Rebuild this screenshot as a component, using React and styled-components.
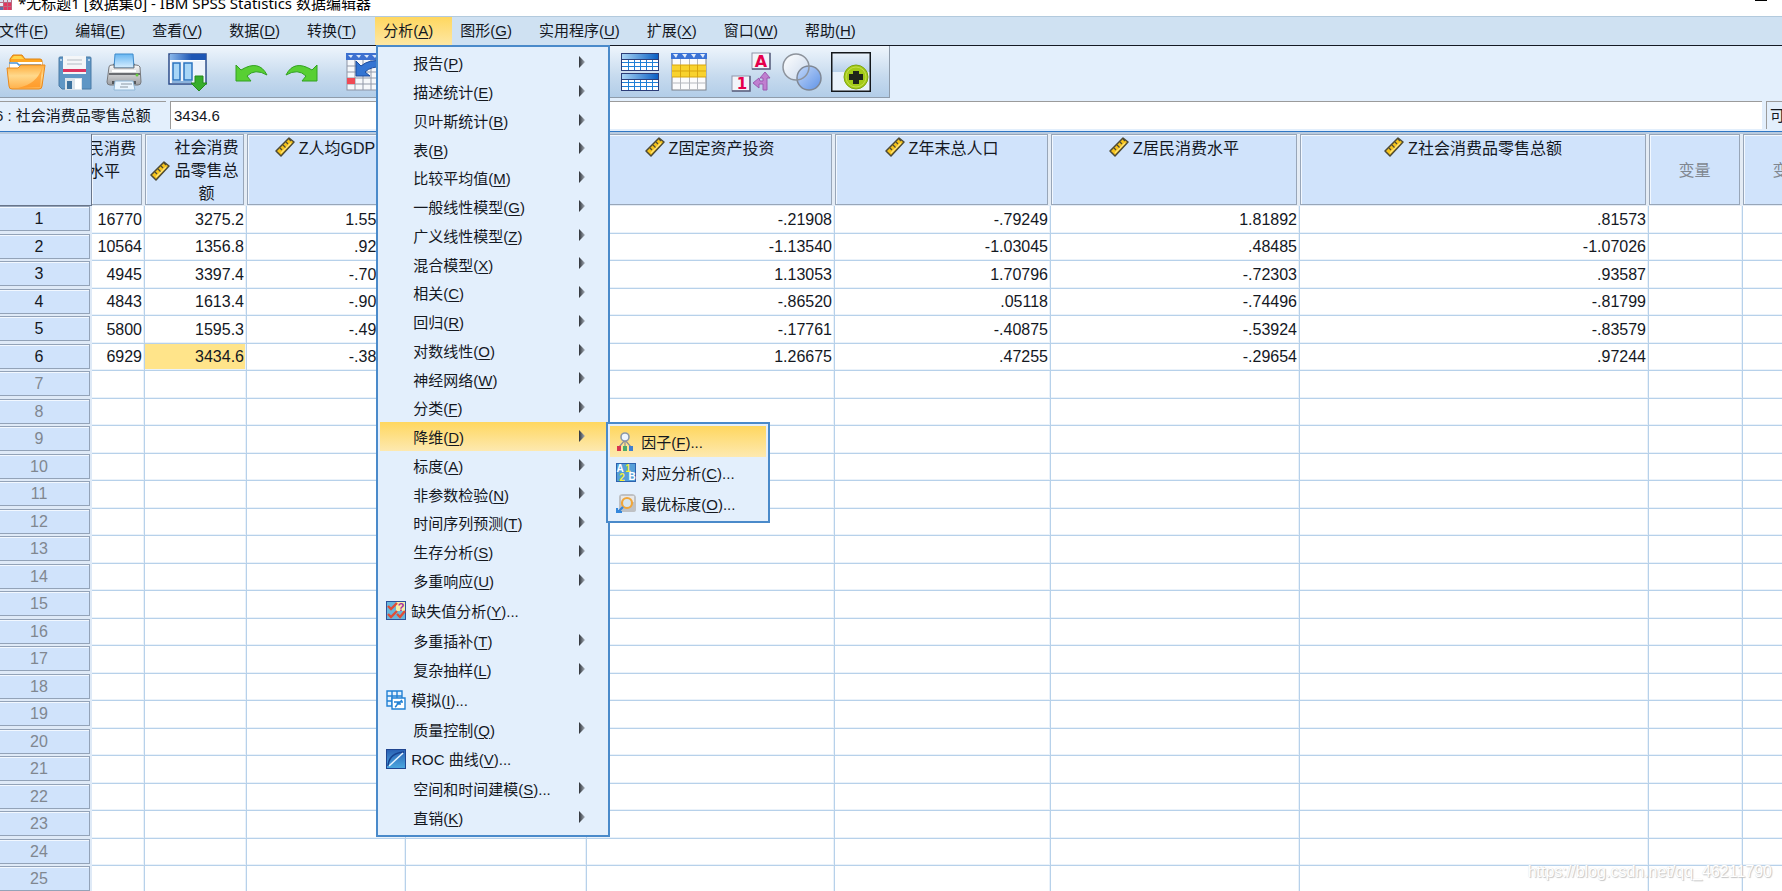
import React from "react";
import styled, { createGlobalStyle, css } from "styled-components";

const GlobalStyle = createGlobalStyle`
  * { box-sizing: border-box; }
  html, body { margin: 0; padding: 0; overflow: hidden; }
  body, button, input {
    font-family: "Liberation Sans", "Noto Sans CJK SC", sans-serif;
    font-size: 15px;
    color: #14181f;
  }
  button { border: 0; background: none; padding: 0; margin: 0; }
  svg { display: block; flex: none; }
`;

const Window = styled.div`
  height: 100vh;
  display: flex;
  flex-direction: column;
  overflow: hidden;
  background: #fff;
`;

const TitleBar = styled.header`
  height: 16px;
  flex: none;
  display: flex;
  justify-content: space-between;
  overflow: hidden;
  padding-right: 15px;
`;

const TitleLeft = styled.div`
  display: flex;
  align-items: flex-start;
  gap: 6px;
`;

const Title = styled.h1`
  margin: -8px 0 0;
  font: 400 15px/22px "Noto Sans", "Noto Sans CJK SC", sans-serif;
  color: #000;
  white-space: nowrap;
`;

const Minimize = styled.button`
  width: 12px;
  height: 1px;
  background: #000;
`;

const MenuBar = styled.nav`
  flex: none;
  display: flex;
  height: 30px;
  padding-right: 8px;
  background: #cfe1f2;
  border-top: 1px solid #b3cadd;
  border-bottom: 1px solid #151a24;
`;

const MenuSlot = styled.div`
  position: relative;
  display: flex;
  &:first-child { margin-left: -9px; }
`;

const MenuButton = styled.button`
  padding: 0 19px 0 8px;
  line-height: 28px;
  white-space: nowrap;
  background: ${(p) => (p.$open ? "linear-gradient(#ffd75f, #fde7a4)" : "none")};
`;

const Key = styled.u`
  text-underline-offset: 2px;
  text-decoration-thickness: 1px;
`;

const popup = css`
  position: absolute;
  background: #e3effc;
  border: 2px solid #4a8aca;
  display: flex;
  flex-direction: column;
`;

const DropDown = styled.div`
  ${popup}
  z-index: 5;
  top: 28px;
  left: 1px;
  width: 234px;
  padding: 1px 0 3px 2px;
`;

const SubMenu = styled.div`
  ${popup}
  z-index: 6;
  top: 0;
  left: 226px;
  width: 164px;
  padding: 2px;
`;

const ItemSlot = styled.div`
  position: relative;
  display: flex;
  height: ${(p) => (p.$tall ? "31px" : "29px")};
  &:nth-child(4n) { height: ${(p) => (p.$tall ? "31px" : "28px")}; }
`;

const Item = styled.button`
  flex: 1;
  display: grid;
  grid-template-columns: ${(p) => (p.$icon ? "20px" : "28px")} 1fr 8px;
  column-gap: 5px;
  align-items: center;
  padding: 0 22px 0 ${(p) => (p.$icon ? "6px" : "0px")};
  text-align: left;
  white-space: nowrap;
  background: ${(p) => (p.$active ? "linear-gradient(#ffd75f, #fde9b0)" : "none")};
`;

const Toolbar = styled.div`
  flex: none;
  height: 55px;
  display: flex;
  align-items: flex-start;
  background: #e3effc;
`;

const ToolPanel = styled.div`
  width: 890px;
  height: 52px;
  display: flex;
  align-items: center;
  gap: 24px;
  padding-left: 6px;
  background: linear-gradient(#eef5fc, #c6daee 60%, #b2cde8);
  border-right: 1px solid #8f9cab;
  border-bottom: 1px solid #8f9cab;
`;

const ToolGroup = styled.div`
  display: flex;
  gap: 9px;
`;

const ToolButton = styled.button`
  width: 40px;
  height: 40px;
  display: grid;
  place-content: center;
`;

const CellBar = styled.div`
  flex: none;
  height: 30px;
  display: flex;
  gap: 4px;
  padding-bottom: 2px;
  background: #e3effc;
`;

const CellName = styled.label`
  width: 166px;
  flex: none;
  overflow: hidden;
  line-height: 28px;
  white-space: nowrap;
  border-top: 1px solid #9b9b9b;
`;

const CellNameText = styled.span`
  display: block;
  margin-left: -5px;
`;

const CellValue = styled.input`
  flex: 1;
  min-width: 0;
  padding: 0 3px;
  background: #fff;
  border: 0;
  border-top: 1px solid #9b9b9b;
  border-left: 1px solid #9b9b9b;
  outline: 0;
`;

const VisibleCount = styled.div`
  width: 16px;
  flex: none;
  overflow: hidden;
  padding-left: 3px;
  line-height: 28px;
  white-space: nowrap;
  border-top: 1px solid #9b9b9b;
  border-left: 1px solid #9b9b9b;
`;

const GridArea = styled.main`
  flex: 1;
  min-height: 0;
  overflow: hidden;
  border-top: 1px solid #2f77c5;
`;

const Sheet = styled.table`
  width: 100%;
  min-width: 1837px;
  table-layout: fixed;
  border-collapse: separate;
  border-spacing: 0;
  font-size: 16px;
  border-top: 2px solid #b9cbdf;
`;

const Col = styled.col`
  width: ${(p) => p.$w}px;
`;

const HeadCell = styled.th`
  height: 72px;
  padding: 0 3px 1px 0;
  font-weight: 400;
  vertical-align: top;
  background: #e4ecf5;
`;

const HeadBox = styled.div`
  height: 71px;
  display: flex;
  align-items: ${(p) => (p.$middle ? "center" : "flex-start")};
  justify-content: ${(p) => (p.$clipped ? "flex-end" : "center")};
  gap: 4px;
  overflow: hidden;
  padding: 2px ${(p) => (p.$clipped ? "5px" : "0")} 0 0;
  line-height: 23px;
  text-align: center;
  white-space: pre;
  color: ${(p) => (p.$empty ? "#808790" : "#14181f")};
  background: #d0e3fb;
  border: solid #98a6b8;
  border-width: 1px 1px 1px ${(p) => (p.$clipped ? "0" : "1px")};
  box-shadow: inset 1px 1px 0 #f2f8ff;
`;

const Corner = styled(HeadCell)`
  background: #d0e3fb;
  border-right: 1px solid #68758a;
  border-bottom: 1px solid #68758a;
`;

const Row = styled.tr`
  height: 28px;
  &:nth-child(even) { height: 27px; }
`;

const RowHead = styled.th`
  padding: 0 2px 0 0;
  font-weight: 400;
  vertical-align: top;
  background: #dfeaf7;
`;

const RowBox = styled.div`
  height: 25px;
  padding-right: 11px;
  line-height: 24px;
  text-align: center;
  color: ${(p) => (p.$empty ? "#808790" : "#14181f")};
  background: #d0e3fb;
  border: solid #93a3b8;
  border-width: 1px 1px 1px 0;
  box-shadow: inset 0 1px 0 #f2f8ff;
`;

const Cell = styled.td`
  padding: 0 2px 0 0;
  line-height: 24px;
  text-align: right;
  overflow: hidden;
  white-space: nowrap;
  background: ${(p) => (p.$selected ? "#ffe48a" : "#fff")};
  border-right: 1px solid #b7d1ea;
  border-bottom: 1px solid #b7d1ea;
  box-shadow: inset -1px -1px 0 #eaf2fa;
`;

const Watermark = styled.div`
  position: absolute;
  right: 10px;
  bottom: 9px;
  font-size: 16px;
  line-height: 20px;
  color: #fff;
  text-shadow: 1px 1px 1px #c4c4c4, 0 0 1px #d8d8d8;
`;

/* ---------- icons ---------- */

const Arrow = () => (
  <svg width="8" height="14" viewBox="0 0 8 14">
    <defs>
      <linearGradient id="arrowFill"><stop offset="0" stopColor="#2e3238" /><stop offset="1" stopColor="#a8b0ba" /></linearGradient>
    </defs>
    <path d="M1 0L7 6L1 12Z" fill="url(#arrowFill)" />
  </svg>
);

const Ruler = () => (
  <svg width="20" height="20" viewBox="0 0 20 20">
    <path d="M1 14L14 1L19 5L6 19Z" fill="#f5c21b" stroke="#4d4a35" strokeWidth="1.5" strokeLinejoin="round" />
    <path d="M5 11l2 2M8 8l3 3M11 5l2 2M14 2l2 2" stroke="#4d4a35" strokeWidth="1.2" />
    <path d="M6 16L16 6" stroke="#ffe375" strokeWidth="1.2" />
  </svg>
);

const AppIcon = () => (
  <svg width="12" height="11" viewBox="0 0 12 11">
    <rect width="12" height="10" fill="#b9677f" />
    <path d="M0 0h3v2H0zM4 0h3v2H4zM8 0h3v2H8z" fill="#d9dfee" />
    <path d="M0 3h3v3H0z" fill="#e8edf5" /><path d="M4 3h3v3H4zM8 3h3v3H8zM4 7h3v3H4zM8 7h3v3H8z" fill="#e2365f" /><path d="M0 7h3v3H0z" fill="#5b6fa8" />
  </svg>
);

const OpenIcon = () => (
  <svg width="40" height="36" viewBox="0 0 40 36">
    <defs>
      <linearGradient id="fold" x2="0" y2="1"><stop offset="0" stopColor="#ffac3c" /><stop offset=".45" stopColor="#ffd98c" /><stop offset="1" stopColor="#ffb04a" /></linearGradient>
    </defs>
    <path d="M4 5l3-4h9l3 4h15q2 0 2 2v9H4z" fill="#ffa622" stroke="#df8412" />
    <path d="M5 5l3-3h7l3 3z" fill="#ffd54d" />
    <path d="M4 8h32v7H4z" fill="#fff" /><path d="M3 9h8l2 2h22" fill="none" stroke="#4a93d9" strokeWidth="1.5" />
    <path d="M1 14h11l3-3h24L36 32q0 3-3 3H6q-3 0-3-3z" fill="url(#fold)" stroke="#ea8a1d" />
    <path d="M12 34Q31 30 36 14L34 33z" fill="#ff8c12" opacity=".6" />
  </svg>
);

const SaveIcon = () => (
  <svg width="34" height="36" viewBox="0 0 34 36">
    <g transform="translate(0 2)">
      <path d="M1 2q0-1 1-1h30q1 0 1 1v31H4l-3-3z" fill="#5f96c5" stroke="#4b7ba5" />
      <path d="M5 0h23v18H5z" fill="#f4f6f8" /><path d="M9 4h15M9 8h15" stroke="#b4bcc4" /><path d="M5 13h23v3H5z" fill="#dd3560" />
      <path d="M7 22h17v12H7z" fill="#dbe4ec" /><path d="M9 25h5v8H9z" fill="#3d729f" /><path d="M17 23h6v10h-6z" fill="#fff" />
      <path d="M2 3h2v2H2zM30 3h2v2h-2z" fill="#b8d3ea" />
    </g>
  </svg>
);

const PrintIcon = () => (
  <svg width="36" height="40" viewBox="0 0 36 40">
    <defs>
      <linearGradient id="paper" x2="0" y2="1"><stop offset="0" stopColor="#67b6f2" /><stop offset="1" stopColor="#d9efff" /></linearGradient>
      <linearGradient id="body" x2="0" y2="1"><stop offset="0" stopColor="#fafafa" /><stop offset="1" stopColor="#9b9da1" /></linearGradient>
    </defs>
    <g transform="translate(0 1)">
      <path d="M6 13L9 9h18l3 4z" fill="#4c4e52" /><path d="M9 1h18l1 14H8z" fill="url(#paper)" stroke="#3f8bcb" />
      <path d="M3 14q0-2 3-2h2v3h20v-3h2q3 0 4 2l1 15q0 3-3 3H4q-3 0-3-3z" fill="url(#body)" stroke="#77797d" />
      <path d="M3 20h31v2H3z" fill="#6a6c70" /><path d="M6 17h24v2H6z" fill="#fff" /><circle cx="31" cy="22" r="1.5" fill="#67c93c" />
      <path d="M6 28h24v3H6z" fill="#55585c" /><path d="M9 28h18l2 9H8z" fill="#e9f5ff" stroke="#8fb6d6" /><path d="M15 31h11M14 34h8" stroke="#8b97a2" />
    </g>
  </svg>
);

const RecallIcon = () => (
  <svg width="40" height="40" viewBox="0 0 40 40">
    <defs><linearGradient id="head"><stop offset="0" stopColor="#88b6ea" /><stop offset=".6" stopColor="#1d56b4" /></linearGradient></defs>
    <rect x="1" y="2" width="37" height="30" fill="#fff" stroke="#2c4c8a" strokeWidth="1.5" />
    <path d="M2 2h36v6H2z" fill="url(#head)" /><path d="M3 9h34v22H3z" fill="#edf3fb" />
    <path d="M5 11h7v17H5zM16 11h8v17h-8z" fill="#a8d6f7" stroke="#2b74c0" strokeWidth="1.5" /><path d="M4 30h20" stroke="#2b74c0" />
    <path d="M27 24h8v7h4L31 39l-8-8h4z" fill="#37ad2b" stroke="#258a1d" />
  </svg>
);

const UndoIcon = ({ flip }) => (
  <svg width="34" height="20" viewBox="0 0 34 20">
    <path transform={flip ? "translate(34 0) scale(-1 1)" : undefined} d="M1 3V19H16L12 14Q20 6 32 13Q24 -3 6 8Z" fill="#58cf33" stroke="#32a122" strokeLinejoin="round" />
  </svg>
);

const GotoIcon = () => (
  <svg width="38" height="38" viewBox="0 0 38 38">
    <rect x="1" y="1" width="36" height="36" fill="#f6f8fb" stroke="#8b93a5" />
    <path d="M0 0h38v7H0z" fill="#3c70d0" /><path d="M2 2h5l-2 3zM10 2h5l-2 3zM18 2h5l-2 3zM26 2h5l-2 3z" fill="#d8e6fa" />
    <path d="M1 13h36M1 19h36M1 25h36M1 31h36M9 7v30M17 7v30M25 7v30M32 7v30" stroke="#9299a8" />
    <path d="M1 25h8v6H1z" fill="#f04a55" /><path d="M10 8v15h14l-5-4q6-6 18-5V8q-14-2-22 5z" fill="#3475d3" stroke="#1d4c9d" />
  </svg>
);

const TableMark = ({ y }) => (
  <g>
    <rect x="1" y={y + 6} width="36" height="11" fill="#fff" />
    <path d={`M1 ${y + 9.5}h36M1 ${y + 13.5}h36M7.5 ${y + 6}v11M13.5 ${y + 6}v11M19.5 ${y + 6}v11M25.5 ${y + 6}v11M31.5 ${y + 6}v11`} stroke="#1f7fd6" />
    <rect x=".5" y={y + 0.5} width="37" height="17" fill="none" stroke="#2c3d78" />
    <rect x="1" y={y + 1} width="36" height="5" fill="url(#bar)" />
    <path d={`M1 ${y + 6.5}h36`} stroke="#2c3d78" />
  </g>
);

const SplitIcon = () => (
  <svg width="38" height="40" viewBox="0 0 38 40">
    <defs><linearGradient id="bar"><stop offset="0" stopColor="#a8d4f5" /><stop offset="1" stopColor="#0a5fc4" /></linearGradient></defs>
    <TableMark y={1} /><TableMark y={21} />
  </svg>
);

const SelectIcon = () => (
  <svg width="36" height="38" viewBox="0 0 36 38">
    <rect x="1" y="1" width="34" height="36" fill="#fbfbfc" stroke="#7d828b" />
    <path d="M0 0h36v6H0z" fill="#3b73d6" /><path d="M2 1h5l-2 4zM11 1h5l-2 4zM20 1h5l-2 4zM29 1h5l-2 4z" fill="#e2ecfb" />
    <path d="M1 12h34v12H1z" fill="#f8d22e" />
    <path d="M1 30h34M9.5 6v31M18.5 6v31M26.5 6v31" stroke="#b4b7bd" />
    <path d="M1 12h34M1 18h34M1 24h34M9.5 12v12M18.5 12v12M26.5 12v12" stroke="#d8a50e" />
  </svg>
);

const LabelsIcon = () => (
  <svg width="44" height="40" viewBox="0 0 44 40">
    <rect x="21" y="1" width="18" height="16" fill="#f3f4fa" stroke="#9095aa" /><rect x="1" y="24" width="18" height="15" fill="#f3f4fa" stroke="#9095aa" />
    <path d="M39 1v16H21M19 24v15H1" fill="none" stroke="#5e6482" strokeWidth="1.5" />
    <text x="30" y="15" textAnchor="middle" fontFamily="DejaVu Sans" fontWeight="700" fontSize="16" fill="#e6004c">A</text>
    <text x="11" y="37" textAnchor="middle" fontFamily="DejaVu Sans" fontWeight="700" fontSize="15" fill="#e6004c">1</text>
    <path d="M34 20l5 6h-3v12h-4v-6h-4v4l-6-5 6-5 1 3h3v-3h-3z" fill="#c07fd0" stroke="#9a5bb0" />
  </svg>
);

const SetsIcon = () => (
  <svg width="40" height="40" viewBox="0 0 40 40">
    <defs>
      <linearGradient id="disc" x2="1" y2="1"><stop offset="0" stopColor="#c3d8f8" /><stop offset="1" stopColor="#5f93e8" /></linearGradient>
      <linearGradient id="pale" x2="1" y2="1"><stop offset="0" stopColor="#fff" /><stop offset="1" stopColor="#c9d8ec" /></linearGradient>
    </defs>
    <circle cx="14" cy="15" r="13" fill="url(#pale)" />
    <circle cx="27" cy="26" r="12" fill="url(#disc)" stroke="#7f8794" strokeWidth="1.5" />
    <circle cx="14" cy="15" r="13" fill="none" stroke="#8d939c" strokeWidth="1.5" />
  </svg>
);

const AddIcon = () => (
  <svg width="40" height="40" viewBox="0 0 40 40">
    <defs><linearGradient id="sky" x2="0" y2="1"><stop offset="0" stopColor="#e9f2fb" /><stop offset="1" stopColor="#b7d0ea" /></linearGradient></defs>
    <rect x="1" y="1" width="38" height="38" fill="#e9f2fb" /><path d="M1 1h38v19H1z" fill="url(#sky)" />
    <rect x=".75" y=".75" width="38.5" height="38.5" fill="none" stroke="#14181c" strokeWidth="1.5" />
    <circle cx="25" cy="25" r="12" fill="#a4cb19" stroke="#7fa510" /><circle cx="25" cy="25" r="10" fill="none" stroke="#c4de4a" />
    <path d="M22 19h6v3h4v6h-4v4h-6v-4h-4v-6h4z" fill="#20251a" />
  </svg>
);

const MissingIcon = () => (
  <svg width="20" height="19" viewBox="0 0 20 19">
    <rect x=".5" y=".5" width="19" height="18" fill="#69b7dc" stroke="#2c529c" /><path d="M10 1h9v9h-9z" fill="#f5efa8" />
    <path d="M2 5l3 3 6-6M2 13l3 3 6-6M11 13l3 3 5-6" fill="none" stroke="#e24d36" strokeWidth="2.4" />
    <text x="15" y="10" textAnchor="middle" fontFamily="Liberation Sans" fontWeight="700" fontSize="11" fill="#a52aa4">?</text>
  </svg>
);

const SimulateIcon = () => (
  <svg width="20" height="20" viewBox="0 0 20 20">
    <path d="M1 1h15v15H1zM1 6h15M1 11h15M6 1v15M11 1v15" fill="#e6f2fd" stroke="#2281d3" strokeWidth="1.4" />
    <path d="M6 8h13v11H6z" fill="#fff" stroke="#2281d3" strokeWidth="1.4" /><path d="M8 12h9M12 12q-1 4-3 5M11 14h4M16 10l-4 4" stroke="#2281d3" strokeWidth="1.4" fill="none" />
  </svg>
);

const RocIcon = () => (
  <svg width="20" height="20" viewBox="0 0 20 20">
    <defs><linearGradient id="roc" x2="0" y2="1"><stop offset="0" stopColor="#2a60b4" /><stop offset="1" stopColor="#4ba8df" /></linearGradient></defs>
    <rect x=".5" y=".5" width="19" height="19" fill="url(#roc)" stroke="#1f4590" />
    <path d="M2 17Q3 4 18 3" fill="none" stroke="#16408f" strokeWidth="1.5" /><path d="M3 17L17 4" stroke="#e6f4ff" strokeWidth="1.5" />
  </svg>
);

const FactorIcon = () => (
  <svg width="20" height="20" viewBox="0 0 20 20">
    <path d="M9 8L3 15M9 8v7M9 8l6 7" stroke="#8a8f96" strokeWidth="1.2" /><circle cx="9" cy="5" r="4" fill="#eef5ff" stroke="#8b98aa" strokeWidth="1.6" />
    <path d="M1 14h4v5H1z" fill="#d8354e" /><path d="M7 14h4v5H7z" fill="#4aaa6b" /><path d="M13 14h4v5h-4z" fill="#3f7ed0" />
  </svg>
);

const CorrespondIcon = () => (
  <svg width="20" height="19" viewBox="0 0 20 19">
    <rect x=".5" y=".5" width="19" height="18" fill="#559fd8" stroke="#2c62ae" />
    <g fontFamily="Liberation Sans" fontWeight="700" fontSize="10" textAnchor="middle">
      <text x="4" y="9" fill="#fff">A</text><text x="12" y="9" fill="#f3f03a">1</text><text x="6" y="18" fill="#f3f03a">2</text><text x="16" y="17" fill="#fff">B</text>
    </g>
  </svg>
);

const OptimalIcon = () => (
  <svg width="20" height="19" viewBox="0 0 20 19">
    <path d="M3 3q0-3 4-3h9q3 0 4 3v13q0 2-3 2H6q-3 0-3-3z" fill="#bfc1c4" /><path d="M5 2h13v6H5z" fill="#e8e8e8" />
    <circle cx="11" cy="9" r="5" fill="#d6e6f1" stroke="#f0a63a" strokeWidth="2.2" /><path d="M7 13l-5 5M1 14v4h5" stroke="#3487dc" strokeWidth="2.2" fill="none" />
  </svg>
);

/* ---------- data ---------- */

const MENUS = ["文件(F)", "编辑(E)", "查看(V)", "数据(D)", "转换(T)", "分析(A)", "图形(G)", "实用程序(U)", "扩展(X)", "窗口(W)", "帮助(H)"];

const ANALYZE = [
  "报告(P)", "描述统计(E)", "贝叶斯统计(B)", "表(B)", "比较平均值(M)", "一般线性模型(G)", "广义线性模型(Z)",
  "混合模型(X)", "相关(C)", "回归(R)", "对数线性(O)", "神经网络(W)", "分类(F)", "降维(D)", "标度(A)",
  "非参数检验(N)", "时间序列预测(T)", "生存分析(S)", "多重响应(U)", ["缺失值分析(Y)...", <MissingIcon />],
  "多重插补(T)", "复杂抽样(L)", ["模拟(I)...", <SimulateIcon />], "质量控制(Q)", ["ROC 曲线(V)...", <RocIcon />],
  "空间和时间建模(S)...", "直销(K)",
].map((entry) => (Array.isArray(entry) ? { label: entry[0], icon: entry[1] } : { label: entry }));

const REDUCTION = [
  { label: "因子(F)...", icon: <FactorIcon />, active: true },
  { label: "对应分析(C)...", icon: <CorrespondIcon /> },
  { label: "最优标度(O)...", icon: <OptimalIcon /> },
];

const TOOLS = [
  [["打开", <OpenIcon />], ["保存", <SaveIcon />], ["打印", <PrintIcon />]],
  [["重新调用对话框", <RecallIcon />]],
  [["撤销", <UndoIcon />], ["重做", <UndoIcon flip />]],
  [["转到个案", <GotoIcon />], ["转到变量", <GotoIcon />]],
  [["变量", <SelectIcon />], ["查找", <SetsIcon />], ["插入个案", <SelectIcon />]],
  [["拆分文件", <SplitIcon />], ["选择个案", <SelectIcon />]],
  [["值标签", <LabelsIcon />], ["使用变量集", <SetsIcon />], ["定制工具栏", <AddIcon />]],
];

const COLUMNS = [
  { w: 53, name: "居民消费\n水平", clipped: true },
  { w: 102, name: "社会消费\n品零售总\n额", ruler: true, middle: true },
  { w: 159, name: "Z人均GDP", ruler: true },
  { w: 181, name: "" },
  { w: 248, name: "Z固定资产投资", ruler: true },
  { w: 216, name: "Z年末总人口", ruler: true },
  { w: 249, name: "Z居民消费水平", ruler: true },
  { w: 349, name: "Z社会消费品零售总额", ruler: true },
  { w: 94, name: "变量", middle: true, empty: true },
  { w: 94, name: "变量", middle: true, empty: true },
];

const DATA = [
  ["16770", "3275.2", "1.55000", "", "-.21908", "-.79249", "1.81892", ".81573"],
  ["10564", "1356.8", ".92000", "", "-1.13540", "-1.03045", ".48485", "-1.07026"],
  ["4945", "3397.4", "-.70000", "", "1.13053", "1.70796", "-.72303", ".93587"],
  ["4843", "1613.4", "-.90000", "", "-.86520", ".05118", "-.74496", "-.81799"],
  ["5800", "1595.3", "-.49000", "", "-.17761", "-.40875", "-.53924", "-.83579"],
  ["6929", "3434.6", "-.38000", "", "1.26675", ".47255", "-.29654", ".97244"],
];

const ROWS = Array.from({ length: 26 }, (_, i) => DATA[i] || []);

function Label({ text }) {
  const at = text.indexOf("(") + 1;
  return (
    <span>
      {text.slice(0, at)}
      <Key>{text[at]}</Key>
      {text.slice(at + 1)}
    </span>
  );
}

function AnalyzeMenu() {
  return (
    <DropDown role="menu">
      {ANALYZE.map(({ label, icon }) => {
        const active = label === "降维(D)";
        return (
          <ItemSlot key={label} $tall={!!icon}>
            <Item role="menuitem" $icon={!!icon} $active={active}>
              <span>{icon}</span>
              <Label text={label} />
              {!icon && <Arrow />}
            </Item>
            {active && (
              <SubMenu role="menu">
                {REDUCTION.map((sub) => (
                  <ItemSlot key={sub.label} $tall>
                    <Item role="menuitem" $icon $active={sub.active}>
                      {sub.icon}
                      <Label text={sub.label} />
                    </Item>
                  </ItemSlot>
                ))}
              </SubMenu>
            )}
          </ItemSlot>
        );
      })}
    </DropDown>
  );
}

export default function App() {
  return (
    <Window>
      <GlobalStyle />
      <TitleBar>
        <TitleLeft>
          <AppIcon />
          <Title>*无标题1 [数据集0] - IBM SPSS Statistics 数据编辑器</Title>
        </TitleLeft>
        <Minimize aria-label="最小化" />
      </TitleBar>

      <MenuBar>
        {MENUS.map((menu) => {
          const open = menu === "分析(A)";
          return (
            <MenuSlot key={menu}>
              <MenuButton $open={open} aria-expanded={open}>
                <Label text={menu} />
              </MenuButton>
              {open && <AnalyzeMenu />}
            </MenuSlot>
          );
        })}
      </MenuBar>

      <Toolbar>
        <ToolPanel>
          {TOOLS.map((group, i) => (
            <ToolGroup key={i}>
              {group.map(([name, icon]) => (
                <ToolButton key={name} aria-label={name}>{icon}</ToolButton>
              ))}
            </ToolGroup>
          ))}
        </ToolPanel>
      </Toolbar>

      <CellBar>
        <CellName htmlFor="cell-value">
          <CellNameText>6 : 社会消费品零售总额</CellNameText>
        </CellName>
        <CellValue id="cell-value" defaultValue="3434.6" />
        <VisibleCount>可视</VisibleCount>
      </CellBar>

      <GridArea>
        <Sheet>
          <colgroup>
            <Col $w={92} />
            {COLUMNS.map((c, i) => <Col key={i} $w={c.w} />)}
          </colgroup>
          <thead>
            <tr>
              <Corner as="td" />
              {COLUMNS.map((c, i) => (
                <HeadCell key={i} scope="col">
                  <HeadBox $middle={c.middle} $clipped={c.clipped} $empty={c.empty}>
                    {c.ruler && <Ruler />}
                    <span>{c.name}</span>
                  </HeadBox>
                </HeadCell>
              ))}
            </tr>
          </thead>
          <tbody>
            {ROWS.map((row, r) => (
              <Row key={r}>
                <RowHead scope="row">
                  <RowBox $empty={!row.length}>{r + 1}</RowBox>
                </RowHead>
                {COLUMNS.map((_, c) => (
                  <Cell key={c} $selected={r === 5 && c === 1}>{row[c]}</Cell>
                ))}
              </Row>
            ))}
          </tbody>
        </Sheet>
      </GridArea>
      <Watermark>https://blog.csdn.net/qq_46211790</Watermark>
    </Window>
  );
}
